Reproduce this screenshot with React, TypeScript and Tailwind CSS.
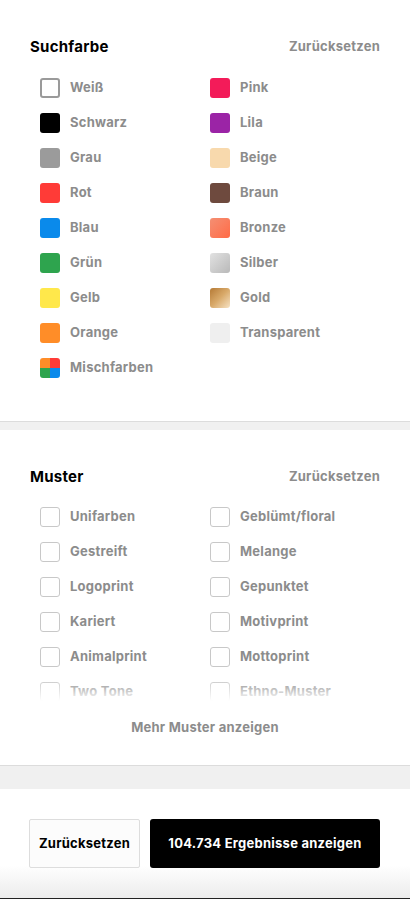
import React from 'react';

const FONT = { fontFamily: 'Inter, "Noto Sans", sans-serif', letterSpacing: '0.25px' };

type Swatch = { label: string; cls: string };

const leftColors: Swatch[] = [
  { label: 'Weiß', cls: 'bg-white border-2 border-[#9a9a9a]' },
  { label: 'Schwarz', cls: 'bg-black' },
  { label: 'Grau', cls: 'bg-[#9b9b9b]' },
  { label: 'Rot', cls: 'bg-[#ff3b37]' },
  { label: 'Blau', cls: 'bg-[#0a8aeb]' },
  { label: 'Grün', cls: 'bg-[#2ea44e]' },
  { label: 'Gelb', cls: 'bg-[#ffe84b]' },
  { label: 'Orange', cls: 'bg-[#ff8d28]' },
];

const rightColors: Swatch[] = [
  { label: 'Pink', cls: 'bg-[#f31b59]' },
  { label: 'Lila', cls: 'bg-[#9b24a6]' },
  { label: 'Beige', cls: 'bg-[#f8d9ad]' },
  { label: 'Braun', cls: 'bg-[#6e4a3e]' },
  { label: 'Bronze', cls: 'bg-gradient-to-br from-[#f48f73] to-[#ff6a45]' },
  { label: 'Silber', cls: 'bg-gradient-to-br from-[#e2e2e2] to-[#b9b9b9]' },
  { label: 'Gold', cls: 'bg-gradient-to-br from-[#b57a34] via-[#d9aa6a] to-[#f6e3c4]' },
  { label: 'Transparent', cls: 'bg-[#efefef]' },
];

const leftPatterns = ['Unifarben', 'Gestreift', 'Logoprint', 'Kariert', 'Animalprint', 'Two Tone'];
const rightPatterns = ['Geblümt/floral', 'Melange', 'Gepunktet', 'Motivprint', 'Mottoprint', 'Ethno-Muster'];

function ColorRow({ s }: { s: Swatch }) {
  return (
    <div className="flex h-[35px] items-center gap-[10px]">
      <span className={`block h-5 w-5 shrink-0 rounded-[3px] ${s.cls}`} />
      <span className="text-[13px] font-bold text-[#8c8c8c]">{s.label}</span>
    </div>
  );
}

function CheckRow({ label }: { label: string }) {
  return (
    <div className="flex h-[35px] items-center gap-[10px]">
      <span className="block h-5 w-5 shrink-0 rounded-[3px] border-[1.5px] border-[#c8c8c8] bg-white" />
      <span className="text-[13px] font-bold text-[#8c8c8c]">{label}</span>
    </div>
  );
}

function Header({ title }: { title: string }) {
  return (
    <div className="flex h-5 items-center justify-between">
      <h2 className="text-[15px] font-bold text-black">{title}</h2>
      <button className="text-[13px] font-bold text-[#8c8c8c]">Zurücksetzen</button>
    </div>
  );
}

export default function App() {
  return (
    <main className="min-h-screen w-[410px] bg-white" style={FONT}>
      {/* Suchfarbe */}
      <section className="px-[30px] pt-[37px] pb-[36px]">
        <Header title="Suchfarbe" />
        <div className="mt-[13px] grid grid-cols-2 pl-[10px]">
          <div className="flex flex-col">
            {leftColors.map((s) => <ColorRow key={s.label} s={s} />)}
            <div className="flex h-[35px] items-center gap-[10px]">
              <span className="grid h-5 w-5 shrink-0 grid-cols-2 grid-rows-2 overflow-hidden rounded-[3px]">
                <span className="bg-[#ff8d28]" />
                <span className="bg-[#ff3b37]" />
                <span className="bg-[#2ea44e]" />
                <span className="bg-[#0a8aeb]" />
              </span>
              <span className="text-[13px] font-bold text-[#8c8c8c]">Mischfarben</span>
            </div>
          </div>
          <div className="flex flex-col">
            {rightColors.map((s) => <ColorRow key={s.label} s={s} />)}
          </div>
        </div>
      </section>

      <div className="h-[9px] border-t border-[#dcdcdc] bg-[#f0f0f0]" />

      {/* Muster */}
      <section className="px-[30px] pt-[37px] pb-[27px]">
        <Header title="Muster" />
        <div className="relative mt-[12px] h-[202px] overflow-hidden">
          <div className="grid grid-cols-2 pl-[10px]">
            <div className="flex flex-col">
              {leftPatterns.map((p) => <CheckRow key={p} label={p} />)}
            </div>
            <div className="flex flex-col">
              {rightPatterns.map((p) => <CheckRow key={p} label={p} />)}
            </div>
          </div>
          <div className="pointer-events-none absolute inset-x-0 bottom-0 h-[22px] bg-gradient-to-b from-white/0 to-white" />
        </div>
        <div className="mt-[17px] flex h-5 items-center justify-center">
          <button className="text-[13px] font-bold text-[#8c8c8c]">Mehr Muster anzeigen</button>
        </div>
      </section>

      <div className="h-6 border-t border-[#dcdcdc] bg-[#f0f0f0]" />

      {/* Footer */}
      <footer className="h-[110px] border-b border-[#222] bg-gradient-to-b from-white from-70% to-[#ececec] px-[29px] pt-[30px]">
        <div className="flex gap-[10px]">
          <button className="h-[49px] w-[111px] rounded-[2px] border border-[#dddddd] bg-[#fcfcfc] text-[13px] font-bold text-black">
            Zurücksetzen
          </button>
          <button className="h-[49px] w-[230px] rounded-[3px] bg-black text-[13px] font-bold text-white">
            104.734 Ergebnisse anzeigen
          </button>
        </div>
      </footer>
    </main>
  );
}
